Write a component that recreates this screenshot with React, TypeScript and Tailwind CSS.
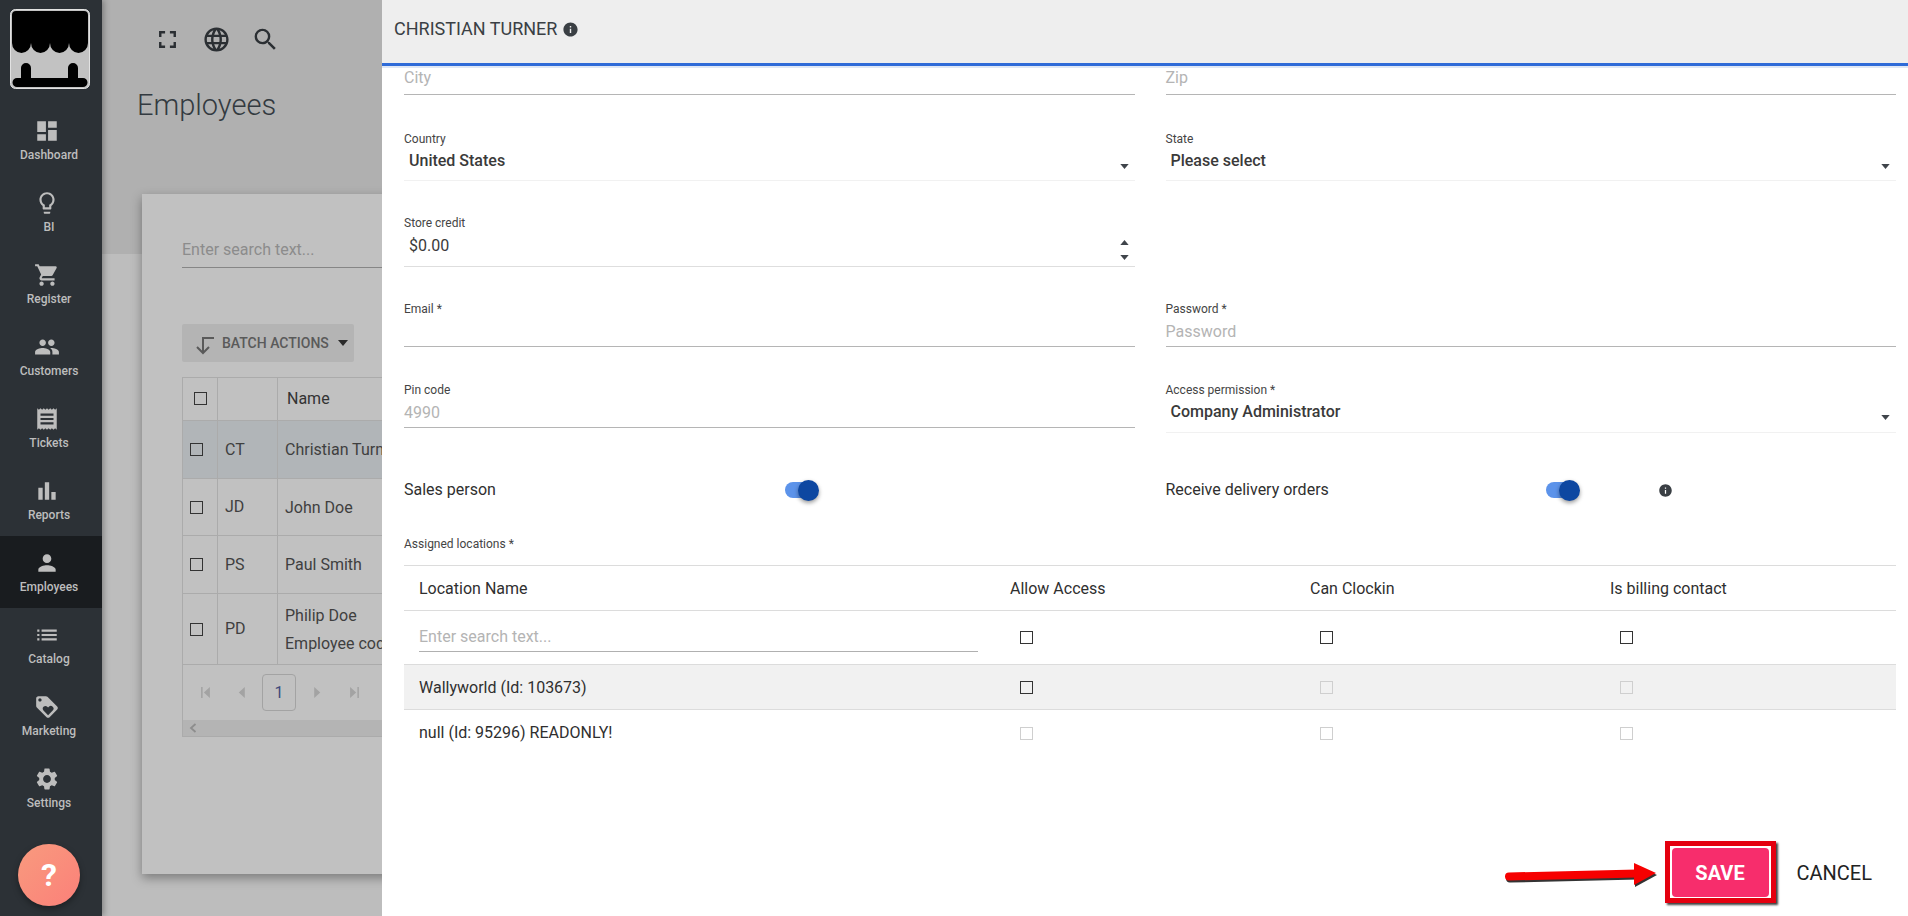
import type { ReactNode } from "react"
import {
  MdBarChart,
  MdDashboard,
  MdFullscreen,
  MdInfo,
  MdLanguage,
  MdLightbulbOutline,
  MdList,
  MdLoyalty,
  MdPeople,
  MdPerson,
  MdReceipt,
  MdSearch,
  MdSettings,
  MdShoppingCart,
} from "react-icons/md"

const navItems = [
  { label: "Dashboard", icon: MdDashboard },
  { label: "BI", icon: MdLightbulbOutline },
  { label: "Register", icon: MdShoppingCart },
  { label: "Customers", icon: MdPeople },
  { label: "Tickets", icon: MdReceipt },
  { label: "Reports", icon: MdBarChart },
  { label: "Employees", icon: MdPerson, active: true },
  { label: "Catalog", icon: MdList },
  { label: "Marketing", icon: MdLoyalty },
  { label: "Settings", icon: MdSettings },
]

const employees = [
  { initials: "CT", name: "Christian Turner", h: "h-[58px]", bg: "bg-[#b1b5b8]" },
  { initials: "JD", name: "John Doe", h: "h-[57px]", bg: "" },
  { initials: "PS", name: "Paul Smith", h: "h-[58px]", bg: "" },
  { initials: "PD", name: "Philip Doe", sub: "Employee code", h: "h-[71px]", bg: "" },
]

function Logo() {
  return (
    <svg viewBox="0 0 80 80" className="h-[80px] w-[80px]">
      <rect x="0.5" y="0.5" width="79" height="79" rx="5" fill="#c2c2c2" stroke="#e2e2e2" />
      <path d="M2 6a4 4 0 0 1 4-4h68a4 4 0 0 1 4 4v28a9.5 10 0 0 1-19 0a9.5 10 0 0 1-19 0a9.5 10 0 0 1-19 0a9.5 10 0 0 1-19 0z" fill="#000" />
      <path d="M11 69V59a5 5 0 0 1 10 0V69H58V59a5 5 0 0 1 10 0V69H73a4.5 4.5 0 0 1 0 9H7a4.5 4.5 0 0 1 0-9z" fill="#000" />
    </svg>
  )
}

function Caret({ up = false, className = "" }: { up?: boolean; className?: string }) {
  return (
    <svg viewBox="0 0 10 6" className={`h-[5px] w-[9px] ${className}`}>
      <path d={up ? "M0 6L5 0l5 6z" : "M0 0l5 6 5-6z"} fill="#3f444a" />
    </svg>
  )
}

function Check({ disabled = false }: { disabled?: boolean }) {
  return <span className={`block h-[13px] w-[13px] border ${disabled ? "border-[#cfcfcf]" : "border-[#333]"}`} />
}

function Field({
  label,
  value,
  placeholder,
  h,
  line = "border-[#b5b5b5]",
  medium = false,
  children,
}: {
  label?: string
  value?: string
  placeholder?: string
  h: string
  line?: string
  medium?: boolean
  children?: ReactNode
}) {
  return (
    <div className={`relative flex flex-col border-b ${line} ${h}`}>
      {label && <div className="h-[17px] text-[12px] leading-[18px] text-[#444]">{label}</div>}
      <div
        className={`text-[16px] leading-[22px] ${placeholder ? "mt-[4px] text-[#b4b4b4]" : "pl-[5px] text-[#3a3a3a]"} ${
          medium ? "mt-[3px] font-medium" : "mt-[4px]"
        }`}
      >
        {value || placeholder}
      </div>
      {children}
    </div>
  )
}

function Toggle() {
  return (
    <span className="relative block h-[16px] w-[30px] rounded-full bg-[#5c93ea]">
      <span className="absolute -top-[2px] -right-[4px] h-[21px] w-[21px] rounded-full bg-[#0d47a1] shadow-[0_2px_4px_rgba(0,0,0,0.4)]" />
    </span>
  )
}

function Pager() {
  return (
    <div className="flex h-[55px] items-center pl-[17px] text-[#a3a3a3]">
      <svg viewBox="0 0 10 10" className="h-[11px] w-[11px]"><path d="M1 0h1.4v10H1zM9 0v10L3.5 5z" fill="currentColor" /></svg>
      <svg viewBox="0 0 10 10" className="ml-[25px] h-[11px] w-[11px]"><path d="M8 0v10L2.5 5z" fill="currentColor" /></svg>
      <span className="ml-[15px] flex h-[37px] w-[34px] items-center justify-center rounded-[4px] border border-[#a3a3a3] text-[16px] text-[#3f4a7c]">1</span>
      <svg viewBox="0 0 10 10" className="ml-[16px] h-[11px] w-[11px]"><path d="M2 0v10l5.5-5z" fill="currentColor" /></svg>
      <svg viewBox="0 0 10 10" className="ml-[26px] h-[11px] w-[11px]"><path d="M1 0v10l5.5-5zM7.6 0H9v10H7.6z" fill="currentColor" /></svg>
    </div>
  )
}

function EmployeesBehind() {
  return (
    <div className="relative ml-[40px] -mt-[60px] h-[680px] w-[1700px] bg-[#c1c1c1] px-[40px] pt-[43px] shadow-[0_4px_10px_rgba(0,0,0,0.35)]">
      <div className="h-[31px] w-[1500px] border-b border-[#868686] text-[16px] leading-[26px] text-[#8c8c8c]">Enter search text...</div>
      <button className="mt-[56px] flex h-[38px] w-[172px] items-center rounded-[2px] bg-[#b4b4b4] pl-[12px] text-[14px] font-medium text-[#5a5a5a]">
        <svg viewBox="0 0 22 20" className="mt-[6px] h-[20px] w-[22px]" fill="none" stroke="#5a5a5a" strokeWidth="2">
          <path d="M20 2H9v15M3 11l6 6 6-6" />
        </svg>
        <span className="ml-[6px]">BATCH ACTIONS</span>
        <span className="ml-[9px] h-0 w-0 border-x-[5px] border-t-[6px] border-x-transparent border-t-[#2b2b2b]" />
      </button>
      <div className="mt-[15px] w-[1500px] border border-[#ababab] text-[16px] text-[#3f3f3f]">
        <div className="flex h-[43px] border-b border-[#ababab]">
          <div className="flex w-[35px] items-center justify-center border-r border-[#ababab] pb-[2px]">
            <Check />
          </div>
          <div className="w-[60px] border-r border-[#ababab]" />
          <div className="flex items-center pl-[9px] text-[#333]">Name</div>
        </div>
        {employees.map((e) => (
          <div key={e.initials} className={`flex border-b border-[#ababab] ${e.h} ${e.bg}`}>
            <div className="flex w-[35px] items-center border-r border-[#ababab] pl-[7px]">
              <Check />
            </div>
            <div className="flex w-[60px] items-center border-r border-[#ababab] pl-[7px]">{e.initials}</div>
            <div className="flex flex-col justify-center gap-[5px] pl-[7px] leading-[23px]">
              <div>{e.name}</div>
              {e.sub && <div>{e.sub}</div>}
            </div>
          </div>
        ))}
        <Pager />
        <div className="flex h-[16px] items-center bg-[#b4b4b4] pl-[6px]">
          <svg viewBox="0 0 8 10" className="h-[10px] w-[8px]" fill="none" stroke="#8d8d8d" strokeWidth="1.8">
            <path d="M6.5 1L2 5l4.5 4" />
          </svg>
        </div>
      </div>
    </div>
  )
}

function LocationsTable() {
  const cols = "grid grid-cols-[594px_300px_300px_298px]"
  return (
    <div className="mt-[13px] border-t border-[#dcdcdc] text-[16px] text-[#2f2f2f]">
      <div className={`${cols} h-[45px] items-center border-b border-[#dcdcdc] pt-[1px]`}>
        <div className="pl-[15px]">Location Name</div>
        <div className="pl-[12px]">Allow Access</div>
        <div className="pl-[12px]">Can Clockin</div>
        <div className="pl-[12px]">Is billing contact</div>
      </div>
      <div className={`${cols} h-[54px] items-center border-b border-[#dcdcdc]`}>
        <div className="ml-[15px] mr-[20px] -mt-[3px] h-[32px] border-b border-[#b0b0b0] leading-[34px] text-[#b4b4b4]">Enter search text...</div>
        <div className="pl-[22px]"><Check /></div>
        <div className="pl-[22px]"><Check /></div>
        <div className="pl-[22px]"><Check /></div>
      </div>
      <div className={`${cols} h-[45px] items-center border-b border-[#dcdcdc] bg-[#f1f1f1] pt-[1px]`}>
        <div className="pl-[15px]">Wallyworld (Id: 103673)</div>
        <div className="pl-[22px]"><Check /></div>
        <div className="pl-[22px]"><Check disabled /></div>
        <div className="pl-[22px]"><Check disabled /></div>
      </div>
      <div className={`${cols} h-[45px] items-center pt-[1px]`}>
        <div className="pl-[15px]">null (Id: 95296) READONLY!</div>
        <div className="pl-[22px]"><Check disabled /></div>
        <div className="pl-[22px]"><Check disabled /></div>
        <div className="pl-[22px]"><Check disabled /></div>
      </div>
    </div>
  )
}

function EmployeePanel() {
  const selectLine = "border-[#f1f1f1]"
  return (
    <div className="absolute inset-y-0 right-0 flex w-[1526px] flex-col bg-white">
      <div className="flex h-[66px] shrink-0 items-center gap-[5px] border-b-[3px] border-[#2f6bd8] bg-[#eeeeee] pb-[6px] pl-[12px] text-[18px] text-[#3a3f44]">
        CHRISTIAN TURNER
        <MdInfo className="mt-[1px] h-[17px] w-[17px] text-[#3a3f44]" />
      </div>
      <div className="h-[2px] shrink-0 bg-[#dfe7f5]" />
      <div className="flex-1 pl-[22px] pr-[12px]">
        <div className="grid grid-cols-2 gap-x-[31px]">
          <Field placeholder="City" h="h-[32px] -mt-[5px]" />
          <Field placeholder="Zip" h="h-[32px] -mt-[5px]" />
        </div>
        <div className="mt-[35px] grid grid-cols-2 gap-x-[31px]">
          <Field label="Country" value="United States" h="h-[51px]" line={selectLine} medium>
            <Caret className="absolute right-[6px] top-[34px]" />
          </Field>
          <Field label="State" value="Please select" h="h-[51px]" line={selectLine} medium>
            <Caret className="absolute right-[6px] top-[34px]" />
          </Field>
        </div>
        <div className="mt-[33px] grid grid-cols-2 gap-x-[31px]">
          <Field label="Store credit" value="$0.00" h="h-[53px]" line="border-[#dedede]">
            <Caret up className="absolute right-[6px] top-[26px]" />
            <Caret className="absolute right-[6px] top-[41px]" />
          </Field>
        </div>
        <div className="mt-[33px] grid grid-cols-2 gap-x-[31px]">
          <Field label="Email *" h="h-[47px]" />
          <Field label="Password *" placeholder="Password" h="h-[47px]" />
        </div>
        <div className="mt-[34px] grid grid-cols-2 gap-x-[31px]">
          <Field label="Pin code" placeholder="4990" h="h-[47px]" line="border-[#b5b5b5]" />
          <Field label="Access permission *" value="Company Administrator" h="h-[52px]" line={selectLine} medium>
            <Caret className="absolute right-[6px] top-[34px]" />
          </Field>
        </div>
        <div className="mt-[45px] grid grid-cols-2 gap-x-[31px] text-[16px] text-[#2f2f2f]">
          <div className="flex h-[24px] items-center">
            <span className="w-[381px]">Sales person</span>
            <Toggle />
          </div>
          <div className="flex h-[24px] items-center">
            <span className="w-[380px]">Receive delivery orders</span>
            <Toggle />
            <MdInfo className="ml-[82px] h-[15px] w-[15px] text-[#3a3f44]" />
          </div>
        </div>
        <div className="mt-[34px] text-[12px] leading-[16px] text-[#444]">Assigned locations *</div>
        <LocationsTable />
      </div>
      <div className="absolute bottom-[19px] right-[36px] flex items-center">
        <button className="flex h-[49px] w-[97px] items-center justify-center rounded-[4px] bg-[#f72d6c] text-[20px] font-bold text-white">SAVE</button>
        <button className="ml-[28px] text-[20px] text-[#222]">CANCEL</button>
      </div>
    </div>
  )
}

function Annotation() {
  return (
    <>
      <div className="absolute left-[1665px] top-[841px] h-[62px] w-[111px] border-[5px] border-[#e4000f] shadow-[2px_2px_2px_rgba(0,0,0,0.75)]" />
      <svg className="absolute left-[1502px] top-[857px] h-[34px] w-[165px]" viewBox="0 0 165 34">
        <path d="M7 19.5L135 16.5" stroke="#333" strokeWidth="8" strokeLinecap="round" transform="translate(1 2)" />
        <path d="M132 6l22 10-22 12z" fill="#333" transform="translate(1 2)" />
        <path d="M7 19.5L135 16.5" stroke="#f60000" strokeWidth="8" strokeLinecap="round" />
        <path d="M132 6l22 10-22 12z" fill="#f60000" />
      </svg>
    </>
  )
}

export default function App() {
  return (
    <div className="relative flex h-[916px] w-[1908px] overflow-hidden bg-[#bdbdbd] font-['Roboto',sans-serif]">
      <aside className="relative z-10 flex w-[102px] shrink-0 flex-col bg-[#2c3136] shadow-[2px_0_6px_rgba(0,0,0,0.3)]">
        <div className="h-[104px] pl-[10px] pt-[9px]">
          <Logo />
        </div>
        {navItems.map((item) => (
          <div
            key={item.label}
            className={`flex h-[72px] flex-col items-center pr-[4px] pt-[14px] ${item.active ? "bg-[#191c1f]" : ""}`}
          >
            <item.icon className="-ml-[4px] h-[26px] w-[26px] text-[#bdbdbd]" />
            <span className="mt-[3px] text-[12px] font-medium leading-[16px] text-[#bdbdbd]">{item.label}</span>
          </div>
        ))}
        <div className="ml-[18px] mt-[20px] flex h-[62px] w-[62px] items-center justify-center rounded-full bg-gradient-to-tl from-[#fb8079] to-[#f89a7e] text-[32px] font-bold text-white shadow-[0_3px_6px_rgba(0,0,0,0.35)]">
          ?
        </div>
      </aside>

      <main className="flex-1">
        <div className="h-[254px] bg-[#b0b0b0] pl-[35px]">
          <div className="flex h-[78px] items-center gap-[20px] pl-[16px] text-[#2b2f33]">
            <MdFullscreen className="h-[29px] w-[29px]" />
            <MdLanguage className="h-[29px] w-[29px]" />
            <MdSearch className="h-[29px] w-[29px]" />
          </div>
          <h1 className="mt-[7px] text-[29px] font-light leading-[40px] text-[#333a40]">Employees</h1>
        </div>
        <EmployeesBehind />
      </main>

      <EmployeePanel />
      <Annotation />
    </div>
  )
}
